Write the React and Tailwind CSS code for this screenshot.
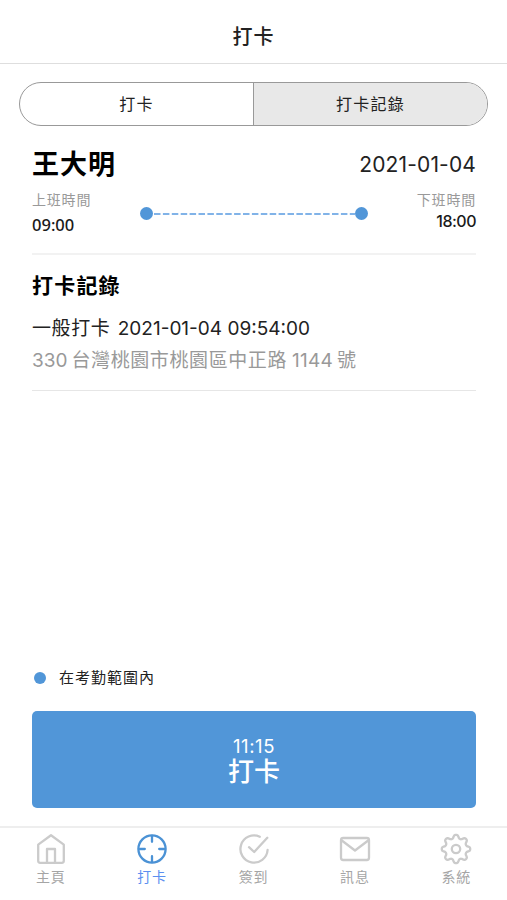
import React from 'react';

const iconProps = {
  width: 32,
  height: 32,
  viewBox: '0 0 32 32',
  fill: 'none',
  stroke: 'currentColor',
  strokeWidth: 2.3,
  strokeLinecap: 'round',
  strokeLinejoin: 'round',
};

const HomeIcon = () => (
  <svg {...iconProps}>
    <path d="M3.2 11.6 16 2.2l12.8 9.4v16.2a2 2 0 0 1-2 2H5.2a2 2 0 0 1-2-2z" />
    <path d="M12 29.500V16h8v13.500" />
  </svg>
);

const PunchIcon = () => (
  <svg {...iconProps}>
    <circle cx="16" cy="16" r="13.600" />
    <path d="M16 3v5.800M16 23.200V29M3 16h5.800M23.200 16H29" />
  </svg>
);

const CheckIcon = () => (
  <svg {...iconProps}>
    <path d="M21.800 3.700A13.600 13.600 0 1 0 29.600 17" />
    <path d="m11 14.200 5.200 4.800L29.300 4.800" />
  </svg>
);

const MailIcon = () => (
  <svg {...iconProps}>
    <rect x="2" y="5" width="28" height="22" rx="2.200" />
    <path d="m2.800 7.500 13.200 10 13.200-10" />
  </svg>
);

const gearPath =
  Array.from({ length: 96 }, (_, i) => {
    const a = (i / 96) * Math.PI * 2;
    const r = 12.5 + 1.9 * Math.tanh(1.5 * Math.cos(8 * a));
    return `${i ? 'L' : 'M'}${(16 + r * Math.cos(a)).toFixed(2)} ${(16 + r * Math.sin(a)).toFixed(2)}`;
  }).join('') + 'Z';

const SettingsIcon = () => (
  <svg {...iconProps}>
    <path d={gearPath} />
    <circle cx="16" cy="16" r="4.200" />
  </svg>
);

const navItems = [
  { label: '主頁', Icon: HomeIcon },
  { label: '打卡', Icon: PunchIcon, active: true },
  { label: '簽到', Icon: CheckIcon },
  { label: '訊息', Icon: MailIcon },
  { label: '系統', Icon: SettingsIcon },
];

const App = () => {
  return (
    <div className="flex h-[900px] w-[507px] flex-col overflow-hidden bg-white font-['Inter','Noto_Sans_CJK_TC',sans-serif] text-[#222]">
      {/* Header */}
      <header className="flex h-16 shrink-0 items-center justify-center border-b border-[#dedede] pt-2.5">
        <h1 className="text-[20px] font-medium tracking-[1px]">打卡</h1>
      </header>

      {/* Tabs */}
      <div className="mx-[19px] mt-[18px] flex h-11 shrink-0 overflow-hidden rounded-full border border-[#999] text-[16px] tracking-[1.3px]">
        <button className="flex-1 border-r border-[#999]">打卡</button>
        <button className="flex-1 bg-[#e8e8e8]">打卡記錄</button>
      </div>

      <main className="flex flex-1 flex-col pr-[31px] pl-8">
        {/* Shift */}
        <section className="h-[129px] border-b-2 border-[#f2f2f2] pt-[19px]">
          <div className="flex h-10 items-center justify-between">
            <h2 className="text-[27px] font-bold tracking-[1px] text-black">王大明</h2>
            <span className="text-[21px] tracking-[0.15px]">2021-01-04</span>
          </div>
          <div className="flex justify-between pt-[3px]">
            <div>
              <p className="text-[14px] leading-6 tracking-[0.8px] text-[#999]">上班時間</p>
              <p className="font-['Noto_Sans'] text-[16.500px] leading-[26px] font-medium text-[#1a1a1a]">09:00</p>
            </div>
            <div className="flex h-[51px] items-center">
              <span className="size-[13px] rounded-full bg-[#5196d8]" />
              <svg width="202" height="2" className="text-[#81b3e8]">
                <line x1="1" y1="1" x2="202" y2="1" stroke="currentColor" strokeWidth="2" strokeDasharray="6.500 2.400" />
              </svg>
              <span className="size-[13px] rounded-full bg-[#5196d8]" />
            </div>
            <div className="text-right">
              <p className="text-[14px] leading-6 tracking-[0.8px] text-[#999]">下班時間</p>
              <p className="text-[16px] leading-[18px] font-medium tracking-[-0.5px] text-[#1a1a1a]">18:00</p>
            </div>
          </div>
        </section>

        {/* Records */}
        <section className="h-[136px] border-b border-[#e6e6e6] pt-[15px]">
          <h3 className="text-[21px] leading-8 font-bold tracking-[1.2px] text-black">打卡記錄</h3>
          <p className="mt-[11px] text-[19px] leading-8 whitespace-nowrap">
            <span className="mr-0.5 tracking-[0.6px]">一般打卡</span> 2021-01-04 09:54:00
          </p>
          <p className="flex gap-1 text-[19px] leading-[31px] tracking-[0.6px] whitespace-nowrap text-[#999]">
            <span className="tracking-normal">330</span>
            <span>台灣桃園市桃園區中正路</span>
            <span className="ml-px tracking-[0.2px]">1144</span>
            <span>號</span>
          </p>
        </section>

        {/* Punch */}
        <div className="mt-auto flex items-center gap-[13px] pl-0.5 text-[15px] leading-6 tracking-[1px]">
          <span className="size-3 rounded-full bg-[#5196d8]" />
          <span>在考勤範圍內</span>
        </div>
        <button className="mt-[21px] mb-[18px] flex h-[97px] flex-col items-center justify-center rounded-[5px] bg-[#5196d8] text-white">
          <span className="text-[18.500px] leading-6 tracking-[0.6px]">11:15</span>
          <span className="text-[26px] leading-7 font-medium">打卡</span>
        </button>
      </main>

      {/* Bottom nav */}
      <nav className="flex h-[74px] shrink-0 border-t-2 border-[#eee]">
        {navItems.map(({ label, Icon, active }) => (
          <div key={label} className="flex flex-1 flex-col items-center pt-[5px]">
            <span className={active ? 'text-[#4b92d5]' : 'text-[#cbcbcb]'}>
              <Icon />
            </span>
            <span className={`mt-0.5 text-[14px] leading-5 tracking-[0.8px] ${active ? 'text-[#5b8ff0]' : 'text-[#a5a5a5]'}`}>
              {label}
            </span>
          </div>
        ))}
      </nav>
    </div>
  );
};

export default App;
